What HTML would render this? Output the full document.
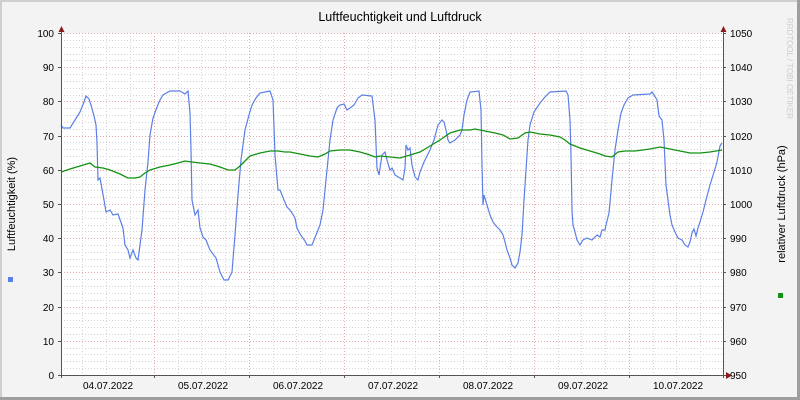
<!DOCTYPE html>
<html><head><meta charset="utf-8"><style>
html,body{margin:0;padding:0;background:#f3f3f3}
svg{display:block}
text{font-family:"Liberation Sans",sans-serif;fill:#000}
</style></head><body>
<svg width="800" height="400" viewBox="0 0 800 400" xmlns="http://www.w3.org/2000/svg">
<rect x="0" y="0" width="800" height="400" fill="#f3f3f3"/>
<rect x="0" y="0" width="800" height="2" fill="#cfcfcf"/>
<rect x="0" y="0" width="2" height="400" fill="#cfcfcf"/>
<rect x="0" y="397" width="800" height="3" fill="#9e9e9e"/>
<rect x="797" y="0" width="3" height="400" fill="#9e9e9e"/>
<rect x="61" y="33" width="662" height="342" fill="#ffffff"/>
<g stroke="#d4d4d4" stroke-width="1" stroke-dasharray="1,2" shape-rendering="crispEdges">
<path d="M61 40.5H723M61 47.5H723M61 54.5H723M61 60.5H723M61 74.5H723M61 81.5H723M61 88.5H723M61 95.5H723M61 108.5H723M61 115.5H723M61 122.5H723M61 129.5H723M61 142.5H723M61 149.5H723M61 156.5H723M61 163.5H723M61 177.5H723M61 184.5H723M61 190.5H723M61 197.5H723M61 211.5H723M61 218.5H723M61 225.5H723M61 231.5H723M61 245.5H723M61 252.5H723M61 259.5H723M61 266.5H723M61 279.5H723M61 286.5H723M61 293.5H723M61 300.5H723M61 313.5H723M61 320.5H723M61 327.5H723M61 334.5H723M61 348.5H723M61 354.5H723M61 361.5H723M61 368.5H723"/>
<path d="M82.5 33V375M106.5 33V375M130.5 33V375M178.5 33V375M201.5 33V375M225.5 33V375M273.5 33V375M296.5 33V375M320.5 33V375M368.5 33V375M391.5 33V375M415.5 33V375M463.5 33V375M486.5 33V375M510.5 33V375M558.5 33V375M581.5 33V375M605.5 33V375M653.5 33V375M676.5 33V375M700.5 33V375"/>
</g>
<g stroke="#e6a8a8" stroke-width="1" stroke-dasharray="1,2" shape-rendering="crispEdges">
<path d="M61 33.5H723M61 67.5H723M61 101.5H723M61 136.5H723M61 170.5H723M61 204.5H723M61 238.5H723M61 272.5H723M61 307.5H723M61 341.5H723"/>
<path d="M154.5 33V375M249.5 33V375M344.5 33V375M439.5 33V375M534.5 33V375M629.5 33V375"/>
</g>
<polyline fill="none" stroke="#5b7fe8" stroke-width="1.2" points="61,125 63,128 70,128 75,120 80,112 84,102 86,96 89,99 91,105 94,116 96,125 97,143 98,180 100,178 104,200 106,212 110,210 113,215 118,214 123,228 125,245 128,250 130,258 133,250 136,258 138,260 140,245 142,230 145,190 148,162 150,135 153,118 157,107 160,100 163,95 170,91 180,91 185,94 188,91 190,113 191,150 192,200 195,215 198,210 200,228 203,237 206,240 210,250 216,258 220,272 224,280 228,280 232,272 235,235 238,195 241,160 245,130 249,115 252,105 256,98 260,93 270,91 273,100 275,155 278,190 280,190 282,195 284,200 287,207 290,210 292,213 295,218 297,228 300,234 305,241 307,245 312,245 316,235 320,225 323,210 327,170 330,140 333,120 337,108 340,105 344,104 347,110 350,108 354,105 358,98 362,95 372,96 375,120 377,168 379,175 382,155 385,152 387,160 390,170 392,168 395,175 400,178 403,180 405,168 406,145 408,150 410,148 412,165 415,177 418,180 420,172 424,162 430,150 434,140 438,125 442,120 444,122 446,130 448,140 450,143 455,140 460,135 462,130 464,115 467,100 470,92 479,91 481,110 482,165 483,205 484,195 487,205 490,215 493,222 496,226 500,230 503,235 505,242 507,250 510,258 512,265 515,268 518,263 520,252 522,235 524,200 526,170 528,140 530,125 534,112 540,103 545,97 550,92 566,91 568,95 570,120 571,155 572,210 573,225 575,232 577,240 580,245 583,240 587,238 592,240 597,235 600,237 602,230 605,230 606,225 609,213 612,180 615,150 618,130 621,113 624,105 628,98 633,95 650,94 652,92 654,95 657,100 659,116 662,120 664,140 666,185 668,200 670,215 672,225 675,232 678,238 682,240 685,245 688,247 690,242 692,233 694,229 696,236 698,228 700,222 703,212 706,200 710,185 714,172 717,162 720,146 722,143"/>
<polyline fill="none" stroke="#129212" stroke-width="1.3" points="61,172 70,169 80,166 90,163 95,167 103,168 110,170 115,172 120,174 128,178 135,178 140,177 145,173 150,170 160,167 170,165 178,163 185,161 192,162 200,163 210,164 220,167 228,170 235,170 240,166 245,161 250,156 260,153 270,151 278,151 285,152 290,152 300,154 310,156 318,157 325,154 330,151 340,150 350,150 360,152 370,155 375,157 380,156 390,157 400,158 410,155 420,152 430,146 440,140 450,133 460,130 470,130 475,129 485,131 495,133 503,135 510,139 518,138 525,133 530,132 540,134 550,135 560,137 565,140 570,144 580,148 590,151 600,154 605,156 612,157 618,152 625,151 635,151 650,149 660,147 670,149 680,151 690,153 700,153 710,152 722,150"/>
<g stroke="#555" stroke-width="1" shape-rendering="crispEdges">
<path d="M61.5 30V378M723.5 30V378M58 375.5H727"/>
<path d="M58 33.5H61M58 67.5H61M58 101.5H61M58 136.5H61M58 170.5H61M58 204.5H61M58 238.5H61M58 272.5H61M58 307.5H61M58 341.5H61"/>
<path d="M723 33.5H726M723 67.5H726M723 101.5H726M723 136.5H726M723 170.5H726M723 204.5H726M723 238.5H726M723 272.5H726M723 307.5H726M723 341.5H726"/>
<path d="M154.5 375V378M249.5 375V378M344.5 375V378M439.5 375V378M534.5 375V378M629.5 375V378"/>
</g>
<path d="M58.5 32L61.5 26L64.5 32Z" fill="#8b1a1a"/>
<path d="M720.5 32L723.5 26L726.5 32Z" fill="#8b1a1a"/>
<path d="M726 372L732 375.5L726 379Z" fill="#8b1a1a"/>
<text x="400" y="21" text-anchor="middle" font-size="12.5">Luftfeuchtigkeit und Luftdruck</text>
<g font-size="10" text-anchor="end">
<text x="54" y="37">100</text><text x="54" y="71">90</text><text x="54" y="105">80</text><text x="54" y="140">70</text><text x="54" y="174">60</text><text x="54" y="208">50</text><text x="54" y="242">40</text><text x="54" y="276">30</text><text x="54" y="311">20</text><text x="54" y="345">10</text><text x="54" y="379">0</text>
</g>
<g font-size="10">
<text x="730" y="37">1050</text><text x="730" y="71">1040</text><text x="730" y="105">1030</text><text x="730" y="140">1020</text><text x="730" y="174">1010</text><text x="730" y="208">1000</text><text x="730" y="242">990</text><text x="730" y="276">980</text><text x="730" y="311">970</text><text x="730" y="345">960</text><text x="730" y="379">950</text>
</g>
<g font-size="10" text-anchor="middle">
<text x="108" y="389">04.07.2022</text><text x="203" y="389">05.07.2022</text><text x="298" y="389">06.07.2022</text><text x="393" y="389">07.07.2022</text><text x="488" y="389">08.07.2022</text><text x="583" y="389">09.07.2022</text><text x="678" y="389">10.07.2022</text>
</g>
<text transform="translate(15,204) rotate(-90)" text-anchor="middle" font-size="11">Luftfeuchtigkeit (%)</text>
<text transform="translate(785,204) rotate(-90)" text-anchor="middle" font-size="11">relativer Luftdruck (hPa)</text>
<rect x="8" y="277" width="5" height="5" fill="#5b7fe8"/>
<rect x="778" y="293" width="5" height="5" fill="#129212"/>
<text transform="translate(787,18) rotate(90)" font-size="8" style="fill:#cccccc">RRDTOOL / TOBI OETIKER</text>
</svg>
</body></html>
